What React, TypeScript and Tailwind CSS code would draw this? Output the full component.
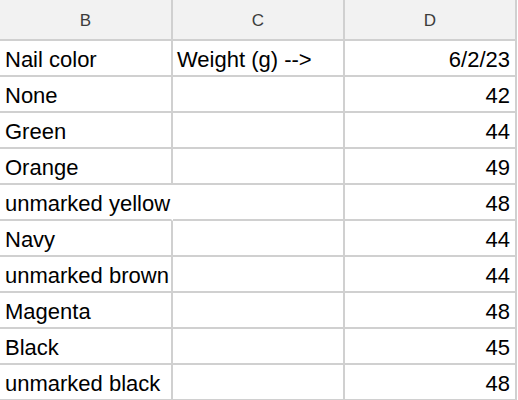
const rows: { name: string; c: string; d: string; spill?: boolean }[] = [
  { name: 'Nail color', c: 'Weight (g) -->', d: '6/2/23' },
  { name: 'None', c: '', d: '42' },
  { name: 'Green', c: '', d: '44' },
  { name: 'Orange', c: '', d: '49' },
  { name: 'unmarked yellow', c: '', d: '48', spill: true },
  { name: 'Navy', c: '', d: '44' },
  { name: 'unmarked brown', c: '', d: '44' },
  { name: 'Magenta', c: '', d: '48' },
  { name: 'Black', c: '', d: '45' },
  { name: 'unmarked black', c: '', d: '48' },
]

export default function App() {
  return (
    <div className="w-[518px] h-[400px] overflow-hidden bg-white font-['Liberation_Sans',Arial,sans-serif]">
      <div className="grid grid-cols-[173px_172px_172px]">
        {/* column headers */}
        {['B', 'C', 'D'].map((col) => (
          <div
            key={col}
            className="h-[41px] flex items-center justify-center pt-[2px] bg-[#f2f2f2] border-r-2 border-b-2 border-[#d0d0d0] text-[17px] text-[#3c3c3c]"
          >
            {col}
          </div>
        ))}

        {rows.map((r) => (
          <div key={r.name} className="contents">
            <div
              className={
                r.spill
                  ? 'h-[36px] flex items-center pl-[5px] pt-[3px] border-b-2 border-[#d0d0d0] border-r-2 border-r-white whitespace-nowrap overflow-visible text-[22px] text-black relative z-10'
                  : 'h-[36px] flex items-center pl-[5px] pt-[3px] border-b-2 border-r-2 border-[#d0d0d0] whitespace-nowrap overflow-hidden text-[22px] text-black'
              }
            >
              {r.name}
            </div>
            <div className="h-[36px] flex items-center pl-[4px] pt-[3px] border-b-2 border-r-2 border-[#d0d0d0] whitespace-nowrap overflow-hidden text-[22px] text-black">
              {r.c}
            </div>
            <div className="h-[36px] flex items-center justify-end pr-[5px] pt-[3px] border-b-2 border-r-2 border-[#d0d0d0] text-[22px] text-black">
              {r.d}
            </div>
          </div>
        ))}
      </div>
    </div>
  )
}
